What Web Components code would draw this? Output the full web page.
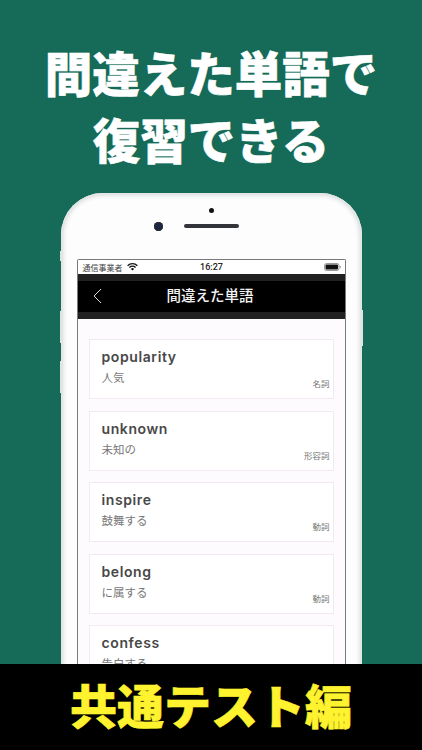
<!DOCTYPE html>
<html lang="ja">
<head>
<meta charset="utf-8">
<title>間違えた単語で復習できる</title>
<style>
    html, body { margin: 0; padding: 0; background: #166b58; }
    body { font-family: "Noto Sans CJK JP", "Noto Sans", sans-serif; }
</style>
</head>
<body>
<promo-screen>
    <span slot="headline">間違えた単語で<br>復習できる</span>
    <phone-frame>
        <status-bar></status-bar>
        <nav-header>間違えた単語</nav-header>
        <word-list>
            <word-card word="popularity" meaning="人気" pos="名詞"></word-card>
            <word-card word="unknown" meaning="未知の" pos="形容詞"></word-card>
            <word-card word="inspire" meaning="鼓舞する" pos="動詞"></word-card>
            <word-card word="belong" meaning="に属する" pos="動詞"></word-card>
            <word-card word="confess" meaning="告白する"></word-card>
        </word-list>
    </phone-frame>
    <span slot="banner">共通テスト編</span>
</promo-screen>

<script>
// Outer page: headline, phone area, bottom banner
class PromoScreen extends HTMLElement {
    constructor() {
        super();
        this.attachShadow({ mode: 'open' });
        this.shadowRoot.innerHTML = `
            <style>
                :host {
                    display: flex;
                    flex-direction: column;
                    width: 422px;
                    height: 750px;
                    overflow: hidden;
                    background: #166b58;
                    font-family: "Noto Sans CJK JP", sans-serif;
                }
                .headline {
                    height: 193px;
                    flex: none;
                    box-sizing: border-box;
                    padding-top: 38px;
                    text-align: center;
                    color: #fff;
                    font-size: 47.5px;
                    font-weight: 900;
                    line-height: 67px;
                    white-space: nowrap;
                    -webkit-text-stroke: 0.6px #fff;
                }
                .stage {
                    flex: 1;
                    min-height: 0;
                    overflow: hidden;
                    display: flex;
                    justify-content: center;
                }
                .banner {
                    height: 86px;
                    flex: none;
                    background: #000;
                    color: #fff22e;
                    font-size: 47px;
                    font-weight: 900;
                    line-height: 80px;
                    text-align: center;
                    white-space: nowrap;
                    -webkit-text-stroke: 0.6px #fff22e;
                }
            </style>
            <div class="headline"><slot name="headline"></slot></div>
            <div class="stage"><slot></slot></div>
            <div class="banner"><slot name="banner"></slot></div>
        `;
    }
}

// White phone body with camera, speaker and side buttons
class PhoneFrame extends HTMLElement {
    constructor() {
        super();
        this.attachShadow({ mode: 'open' });
        this.shadowRoot.innerHTML = `
            <style>
                :host {
                    display: block;
                    position: relative;
                    flex: none;
                    box-sizing: border-box;
                    width: 301px;
                    height: 640px;
                    padding: 66px 16px 0;
                    background: #fdfdfe;
                    border-radius: 42px 42px 0 0;
                    box-shadow: inset 0 0 0 2px #e4e6e6, inset 0 0 5px 2px #d5d8d8;
                }
                .sensor {
                    position: absolute;
                    left: 148px;
                    top: 15px;
                    width: 5px;
                    height: 5px;
                    border-radius: 50%;
                    background: #111;
                }
                .camera {
                    position: absolute;
                    left: 93px;
                    top: 29px;
                    width: 9px;
                    height: 9px;
                    border-radius: 50%;
                    background: #1b2740;
                    box-shadow: 0 0 0 1px #2b2b33 inset;
                }
                .speaker {
                    position: absolute;
                    left: 123px;
                    top: 31px;
                    width: 55px;
                    height: 4px;
                    border-radius: 2px;
                    background: #33343a;
                }
                .btn {
                    position: absolute;
                    width: 2px;
                    background: #dfe3e2;
                }
                .screen {
                    height: 100%;
                    box-sizing: border-box;
                    display: flex;
                    flex-direction: column;
                    background: #fdfbfe;
                    border: 1px solid #77797a;
                    border-bottom: 0;
                    border-radius: 2px 2px 0 0;
                    overflow: hidden;
                }
            </style>
            <div class="sensor"></div>
            <div class="camera"></div>
            <div class="speaker"></div>
            <div class="btn" style="left:-1px;top:58px;height:10px"></div>
            <div class="btn" style="left:-1px;top:118px;height:32px"></div>
            <div class="btn" style="left:-1px;top:168px;height:32px"></div>
            <div class="btn" style="right:-1px;top:117px;height:36px"></div>
            <div class="screen"><slot></slot></div>
        `;
    }
}

class StatusBar extends HTMLElement {
    constructor() {
        super();
        this.attachShadow({ mode: 'open' });
        this.shadowRoot.innerHTML = `
            <style>
                :host {
                    display: grid;
                    grid-template-columns: 1fr auto 1fr;
                    align-items: center;
                    flex: none;
                    height: 14px;
                    padding: 0 4px 0 5px;
                    background: #fff;
                    color: #444;
                    font-family: "Noto Sans CJK JP", sans-serif;
                }
                .left { display: flex; align-items: center; gap: 4px; font-size: 8px; }
                .time { font-size: 9px; font-weight: 500; font-family: Roboto, sans-serif; color: #222; }
                .right { display: flex; justify-content: flex-end; align-items: center; }
                svg { display: block; }
            </style>
            <div class="left">
                <span>通信事業者</span>
                <svg width="11" height="8" viewBox="0 0 11 8">
                    <path d="M.6 2.7a7 7 0 0 1 9.8 0" fill="none" stroke="#111" stroke-width="1.3"/>
                    <path d="M2.4 4.5a4.4 4.4 0 0 1 6.2 0" fill="none" stroke="#111" stroke-width="1.3"/>
                    <path d="M3.9 5.9a2.2 2.2 0 0 1 3.2 0L5.5 7.6z" fill="#111"/>
                </svg>
            </div>
            <span class="time">16:27</span>
            <div class="right">
                <svg width="17" height="8" viewBox="0 0 17 8">
                    <rect x=".5" y=".5" width="14.5" height="7" rx="2" fill="none" stroke="#999"/>
                    <rect x="1.5" y="1.5" width="12.5" height="5" rx="1" fill="#111"/>
                    <rect x="15.6" y="2.8" width="1" height="2.4" rx=".5" fill="#999"/>
                </svg>
            </div>
        `;
    }
}

class NavHeader extends HTMLElement {
    constructor() {
        super();
        this.attachShadow({ mode: 'open' });
        this.shadowRoot.innerHTML = `
            <style>
                :host {
                    display: block;
                    flex: none;
                    background: #000;
                    border-top: 7px solid #212121;
                    border-bottom: 7px solid #212121;
                }
                .bar {
                    height: 31px;
                    display: grid;
                    grid-template-columns: 40px 1fr 40px;
                    align-items: center;
                    color: #f4f4f4;
                    font-family: "Noto Sans CJK JP", sans-serif;
                    font-size: 14.5px;
                    font-weight: 500;
                    text-align: center;
                }
                .title { margin: -4px 2px 0 0; line-height: 20px; }
                svg { display: block; margin: -1px 0 0 14px; }
            </style>
            <div class="bar">
                <svg width="10" height="16" viewBox="0 0 10 16">
                    <path d="M9 1 2 8l7 7" fill="none" stroke="#ddd" stroke-width="1"/>
                </svg>
                <span class="title"><slot></slot></span>
                <span></span>
            </div>
        `;
    }
}

class WordList extends HTMLElement {
    constructor() {
        super();
        this.attachShadow({ mode: 'open' });
        this.shadowRoot.innerHTML = `
            <style>
                :host {
                    display: flex;
                    flex-direction: column;
                    gap: 11.4px;
                    padding: 20.4px 11px 0;
                }
            </style>
            <slot></slot>
        `;
    }
}

class WordCard extends HTMLElement {
    constructor() {
        super();
        this.attachShadow({ mode: 'open' });
        const word = this.getAttribute('word') || '';
        const meaning = this.getAttribute('meaning') || '';
        const pos = this.getAttribute('pos');
        this.shadowRoot.innerHTML = `
            <style>
                :host {
                    display: block;
                    position: relative;
                    flex: none;
                    box-sizing: border-box;
                    height: 60px;
                    padding: 8px 12px 0;
                    background: #fff;
                    border: 1px solid #f1ebf1;
                }
                .word {
                    color: #484848;
                    font-family: Inter, Roboto, sans-serif;
                    font-size: 14px;
                    font-weight: 600;
                    letter-spacing: .6px;
                    line-height: 18px;
                }
                .meaning {
                    margin-top: 3px;
                    color: #777;
                    font-family: "Noto Sans CJK JP", sans-serif;
                    font-size: 11.5px;
                    line-height: 17px;
                }
                .pos {
                    position: absolute;
                    right: 3px;
                    bottom: 9px;
                    color: #777;
                    font-family: "Noto Sans CJK JP", sans-serif;
                    font-size: 8.5px;
                    line-height: 12px;
                }
            </style>
            <div class="word">${word}</div>
            <div class="meaning">${meaning}</div>
            ${pos ? `<div class="pos">${pos}</div>` : ''}
        `;
    }
}

customElements.define('promo-screen', PromoScreen);
customElements.define('phone-frame', PhoneFrame);
customElements.define('status-bar', StatusBar);
customElements.define('nav-header', NavHeader);
customElements.define('word-list', WordList);
customElements.define('word-card', WordCard);
</script>
</body>
</html>
